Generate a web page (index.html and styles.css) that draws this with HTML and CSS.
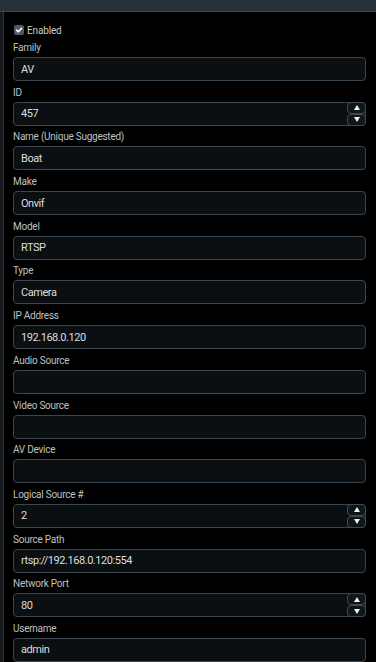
FILE: index.html
```html
<!DOCTYPE html>
<html>
<head>
<meta charset="utf-8">
<link rel="stylesheet" href="styles.css">
</head>
<body>
<div class="top-bar"></div>
<div class="main">
  <div class="side-strip"></div>
  <form class="panel">
    <label class="check-row"><span class="checkbox"><svg viewBox="0 0 10 10" width="10" height="10"><path d="M2.6 5.2 L4.3 6.8 L7.5 3.4" fill="none" stroke="#fff" stroke-width="1.6" stroke-linecap="round" stroke-linejoin="round"/></svg></span>Enabled</label>

    <div class="field"><div class="label">Family</div><div class="box"><input class="inp" value="AV"></div></div>
    <div class="field"><div class="label">ID</div><div class="box"><input class="inp" value="457"><div class="spin"><span class="sb"><i class="up"></i></span><span class="sb"><i class="down"></i></span></div></div></div>
    <div class="field"><div class="label">Name (Unique Suggested)</div><div class="box"><input class="inp" value="Boat"></div></div>
    <div class="field"><div class="label">Make</div><div class="box"><input class="inp" value="Onvif"></div></div>
    <div class="field"><div class="label">Model</div><div class="box"><input class="inp" value="RTSP"></div></div>
    <div class="field"><div class="label">Type</div><div class="box"><input class="inp" value="Camera"></div></div>
    <div class="field"><div class="label">IP Address</div><div class="box"><input class="inp" value="192.168.0.120"></div></div>
    <div class="field"><div class="label">Audio Source</div><div class="box"><input class="inp" value=""></div></div>
    <div class="field"><div class="label">Video Source</div><div class="box"><input class="inp" value=""></div></div>
    <div class="field"><div class="label">AV Device</div><div class="box"><input class="inp" value=""></div></div>
    <div class="field"><div class="label">Logical Source #</div><div class="box"><input class="inp" value="2"><div class="spin"><span class="sb"><i class="up"></i></span><span class="sb"><i class="down"></i></span></div></div></div>
    <div class="field"><div class="label">Source Path</div><div class="box"><input class="inp" value="rtsp://192.168.0.120:554"></div></div>
    <div class="field"><div class="label">Network Port</div><div class="box"><input class="inp" value="80"><div class="spin"><span class="sb"><i class="up"></i></span><span class="sb"><i class="down"></i></span></div></div></div>
    <div class="field"><div class="label">Username</div><div class="box"><input class="inp" value="admin"></div></div>
  </form>
</div>
</body>
</html>
```
FILE: styles.css
```css
* { box-sizing: border-box; }
html, body { margin: 0; padding: 0; background: #000; height: 100%; overflow: hidden; }
body { font-family: Roboto, "Liberation Sans", sans-serif; color: #c4c6c8; }

.top-bar {
  height: 12px;
  background: #26313a;
  border-bottom: 1px solid #3c4953;
}

.main { display: flex; }

.side-strip {
  width: 4px;
  flex: none;
  background: #141a1e;
  border-right: 1px solid #2c353c;
  min-height: 700px;
}

.panel {
  flex: 1;
  padding: 11px 10px 0 9px;
  display: flex;
  flex-direction: column;
}

.check-row {
  display: flex;
  align-items: center;
  gap: 3px;
  height: 14px;
  margin-bottom: 4px;
  margin-left: 1px;
  font-size: 10px;
  letter-spacing: -0.15px;
  color: #c8cacc;
}

.checkbox {
  width: 10px;
  height: 10px;
  border-radius: 2px;
  background: #4b5b67;
  display: flex;
}

.field { margin-bottom: 4.69px; }

.label {
  font-size: 10px;
  line-height: 14px;
  margin-bottom: 2px;
  letter-spacing: -0.25px;
  color: #bec0c2;
}

.box {
  display: flex;
  height: 24px;
  border: 1px solid #39454f;
  border-radius: 4px;
  background: #0b0f12;
}

.inp {
  flex: 1;
  min-width: 0;
  border: 0;
  background: transparent;
  outline: none;
  padding: 0 0 0 7px;
  font-family: Roboto, "Liberation Sans", sans-serif;
  font-size: 11px;
  letter-spacing: -0.45px;
  color: #dcdedf;
}

.spin {
  width: 19px;
  margin: -1px -1px -1px 0;
  display: flex;
  flex-direction: column;
}

.sb {
  flex: 1;
  display: flex;
  align-items: center;
  justify-content: center;
  border: 1px solid #3d4a54;
  border-radius: 4px;
  background: #10171b;
}

.sb i { width: 0; height: 0; border-left: 3.5px solid transparent; border-right: 3.5px solid transparent; }
.sb .up { border-bottom: 5px solid #f2f2f2; }
.sb .down { border-top: 5px solid #f2f2f2; }
```
